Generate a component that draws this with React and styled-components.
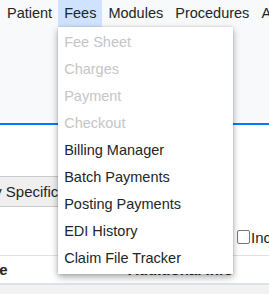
import React from "react";
import styled, { createGlobalStyle } from "styled-components";

const GlobalStyle = createGlobalStyle`
  body {
    margin: 0;
    font-family: "Liberation Sans", Arial, sans-serif;
    color: #212529;
    background: #ffffff;
    overflow: hidden;
  }
`;

const navItems = ["Patient", "Fees", "Modules", "Procedures", "Administration"];

const feesMenu = [
  { label: "Fee Sheet", disabled: true },
  { label: "Charges", disabled: true },
  { label: "Payment", disabled: true },
  { label: "Checkout", disabled: true },
  { label: "Billing Manager" },
  { label: "Batch Payments" },
  { label: "Posting Payments" },
  { label: "EDI History" },
  { label: "Claim File Tracker" },
];

const App = () => {
  return (
    <Page>
      <GlobalStyle />
      <Header>
        <Nav>
          {navItems.map((item) => (
            <NavItem key={item} $active={item === "Fees"}>
              {item}
              {item === "Fees" && (
                <Menu>
                  {feesMenu.map((m) => (
                    <MenuItem key={m.label} $disabled={m.disabled}>
                      {m.label}
                    </MenuItem>
                  ))}
                </Menu>
              )}
            </NavItem>
          ))}
        </Nav>
      </Header>
      <Content>
        <SelectBox>Facility Specific</SelectBox>
        <CheckRow>
          <Check />
          <CheckLabel>Include</CheckLabel>
        </CheckRow>
        <TableHead>
          <HeadCell $shift={-25} $width={128}>Date</HeadCell>
          <HeadCell>Additional Info</HeadCell>
        </TableHead>
        <StripedRow />
      </Content>
    </Page>
  );
};

const Page = styled.div`
  width: 269px;
  height: 294px;
  overflow: hidden;
  position: relative;
`;

const Header = styled.div`
  height: 123px;
  background-color: #f8f9fa;
  border-bottom: 2px solid #007bff;
`;

const Nav = styled.div`
  display: flex;
  white-space: nowrap;
  padding-left: 1px;
`;

const NavItem = styled.div`
  position: relative;
  height: 27px;
  line-height: 27px;
  padding: 0 6px;
  font-size: 14.5px;
  color: #212529;
  background-color: ${(p) => (p.$active ? "#cfe2ff" : "transparent")};
`;

const Menu = styled.div`
  position: absolute;
  top: 100%;
  left: 0;
  width: 175px;
  padding: 2px 0 2px;
  background: #ffffff;
  box-shadow: 0 3px 7px rgba(0, 0, 0, 0.35), 0 0 2px rgba(0, 0, 0, 0.15);
  z-index: 10;
`;

const MenuItem = styled.div`
  height: 27px;
  line-height: 27px;
  padding: 0 6px;
  font-size: 14.5px;
  color: ${(p) => (p.$disabled ? "#c4c6c8" : "#212529")};
`;

const Content = styled.div`
  display: flex;
  flex-direction: column;
  padding-top: 51px;
`;

const SelectBox = styled.div`
  height: 29px;
  line-height: 29px;
  margin-left: -54px;
  width: 220px;
  padding: 0 8px;
  font-size: 15px;
  background-color: #efefef;
  border: 1px solid #c8ccd0;
  border-radius: 4px;
  white-space: nowrap;
`;

const CheckRow = styled.div`
  height: 48px;
  display: flex;
  align-items: flex-end;
  padding: 0 0 9px 237px;
  box-sizing: border-box;
  white-space: nowrap;
`;

const Check = styled.span`
  width: 11px;
  height: 12px;
  border: 1px solid #767676;
  border-radius: 2px;
  margin-bottom: 2px;
  flex: none;
`;

const CheckLabel = styled.span`
  font-size: 15px;
  line-height: 17px;
  margin-left: 1px;
`;

const TableHead = styled.div`
  display: flex;
  height: 27px;
  align-items: center;
  border-top: 1px solid #dee2e6;
  border-bottom: 2px solid #dee2e6;
  white-space: nowrap;
`;

const HeadCell = styled.div`
  font-size: 15px;
  font-weight: bold;
  margin-left: ${(p) => (p.$shift ? `${p.$shift}px` : "0")};
  width: ${(p) => (p.$width ? `${p.$width - p.$shift}px` : "auto")};
  flex: none;
`;

const StripedRow = styled.div`
  height: 30px;
  background-color: #f2f2f2;
`;

export default App;
